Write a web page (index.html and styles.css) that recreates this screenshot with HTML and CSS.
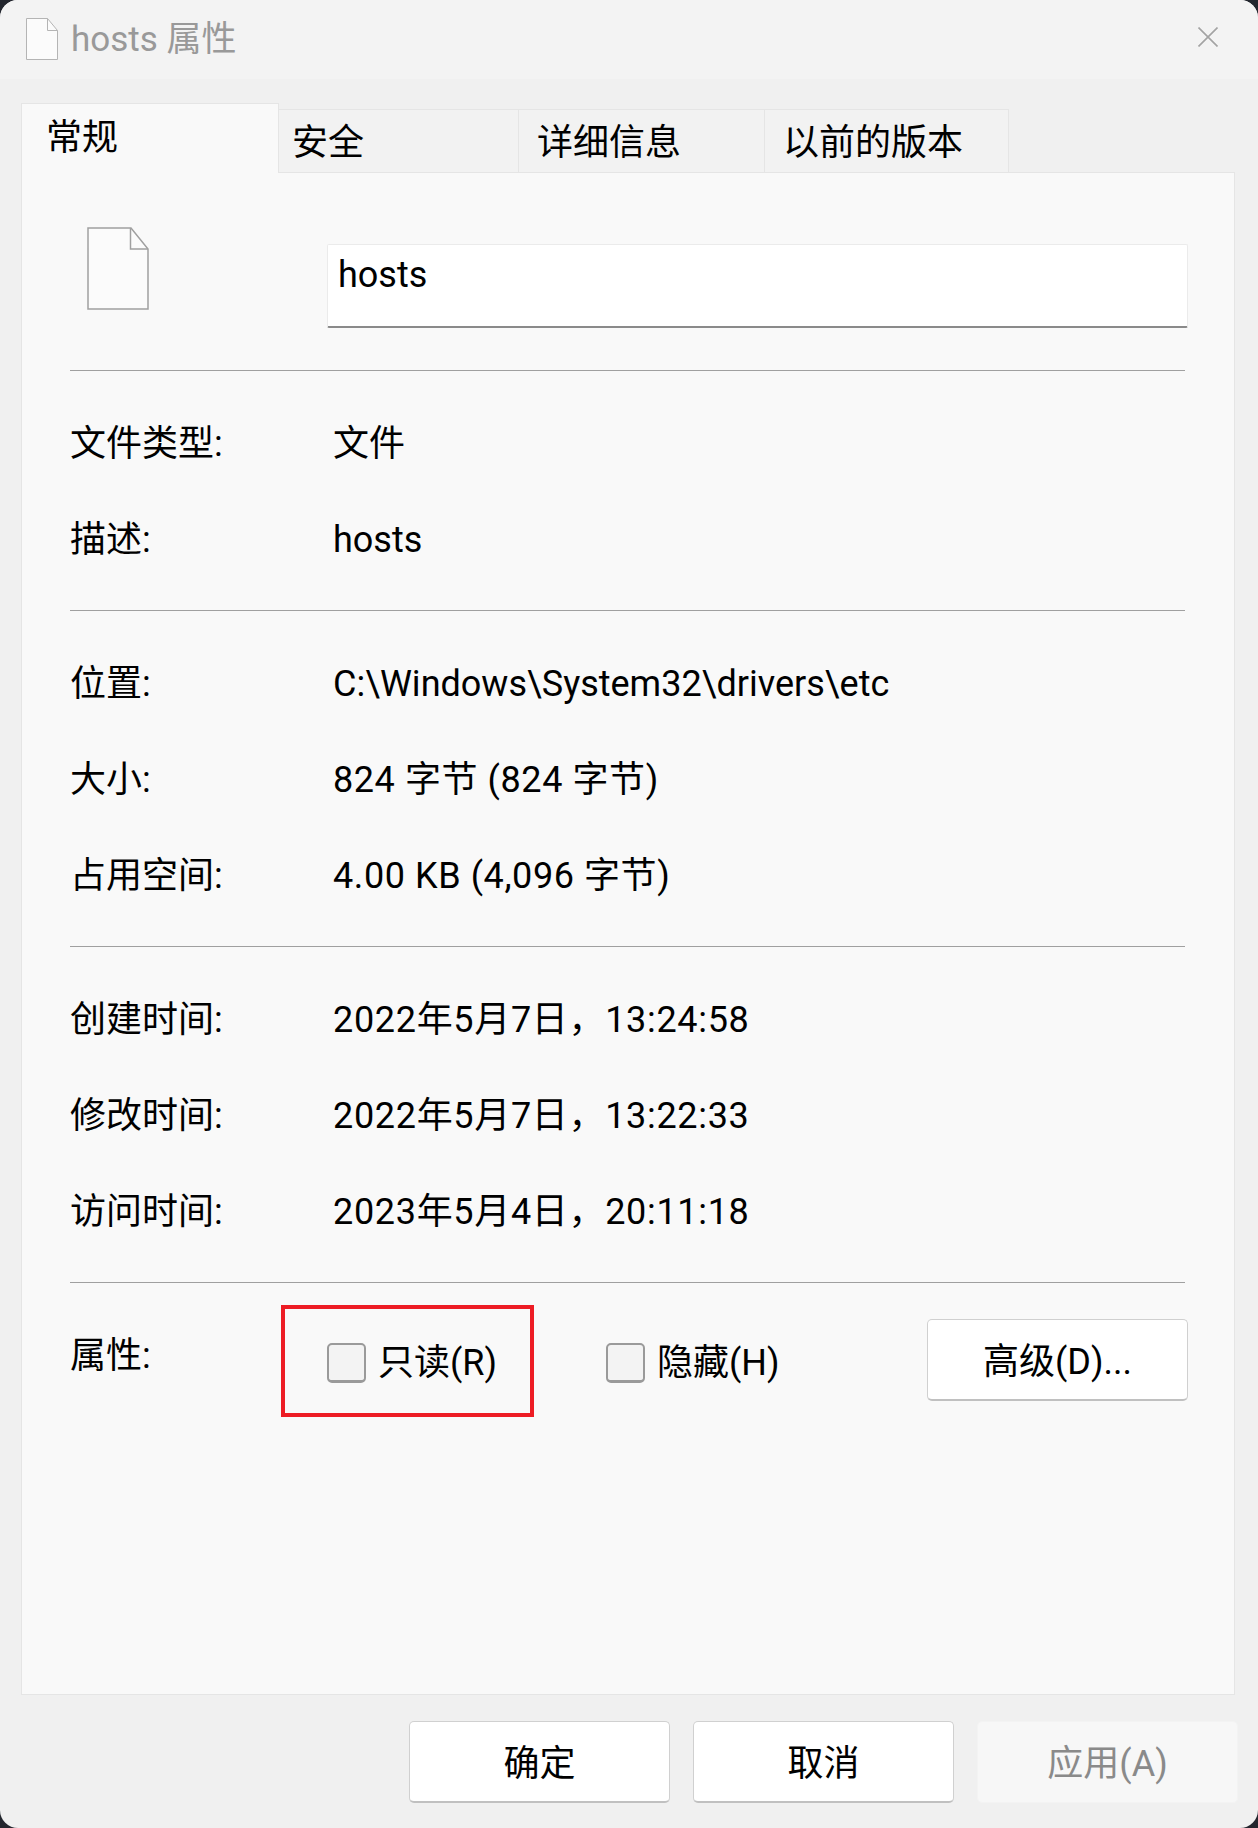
FILE: index.html
```html
<!DOCTYPE html>
<html lang="zh-CN">
<head>
<meta charset="utf-8">
<title>hosts 属性</title>
<link rel="stylesheet" href="styles.css">
</head>
<body>
<div class="window">
  <header class="titlebar">
    <svg class="title-icon" viewBox="0 0 32 42"><path d="M.5.5h21l10 12v29H.5z" fill="#fbfbfb" stroke="#b4b4b4"/><path d="M21.5.5v12h10" fill="none" stroke="#b4b4b4"/></svg>
    <span class="title-text">hosts 属性</span>
    <svg class="close" viewBox="0 0 20 20"><path d="M.5.5l19 19M19.5.5l-19 19" fill="none" stroke="#a3a3a3" stroke-width="1.6"/></svg>
  </header>
  <main class="content">
    <nav class="tabs">
      <div class="tab tab-active">常规</div>
      <div class="tab tab-w1">安全</div>
      <div class="tab tab-w2">详细信息</div>
      <div class="tab tab-w3">以前的版本</div>
    </nav>
    <section class="panel">
      <div class="head">
        <svg class="file-icon" viewBox="0 0 62 83"><path d="M1 1h43l17 21v60H1z" fill="#fbfbfb" stroke="#a0a0a0" stroke-width="1.5"/><path d="M43.5 1v21H61" fill="none" stroke="#a0a0a0" stroke-width="1.5"/></svg>
        <div class="name-input">hosts</div>
      </div>
      <hr class="rule rule-first">
      <div class="row"><span class="label">文件类型:</span><span>文件</span></div>
      <div class="row"><span class="label">描述:</span><span>hosts</span></div>
      <hr class="rule">
      <div class="row"><span class="label">位置:</span><span>C:\Windows\System32\drivers\etc</span></div>
      <div class="row"><span class="label">大小:</span><span class="wide">824 字节 (824 字节)</span></div>
      <div class="row"><span class="label">占用空间:</span><span class="wide">4.00 KB (4,096 字节)</span></div>
      <hr class="rule">
      <div class="row"><span class="label">创建时间:</span><span class="wide date">2022年5月7日，13:24:58</span></div>
      <div class="row"><span class="label">修改时间:</span><span class="wide date">2022年5月7日，13:22:33</span></div>
      <div class="row"><span class="label">访问时间:</span><span class="wide date">2023年5月4日，20:11:18</span></div>
      <hr class="rule">
      <div class="attrs">
        <span class="attr-label">属性:</span>
        <div class="check check-ro"><span class="box"></span><span class="check-text">只读(R)</span><span class="mark"></span></div>
        <div class="check check-hidden"><span class="box"></span><span class="check-text">隐藏(H)</span></div>
        <button class="btn btn-adv">高级(D)...</button>
      </div>
    </section>
    <footer class="actions">
      <button class="btn">确定</button>
      <button class="btn">取消</button>
      <button class="btn btn-off">应用(A)</button>
    </footer>
  </main>
</div>
</body>
</html>
```

FILE: styles.css
```css
* { box-sizing: border-box; }
html, body { margin: 0; padding: 0; }
body {
  width: 1258px;
  height: 1828px;
  background: #23262e;
  font-family: Roboto, "Noto Sans CJK SC", sans-serif;
  font-size: 36px;
  color: #000;
  overflow: hidden;
}
.window {
  width: 1258px;
  height: 1828px;
  background: #f0f0f0;
  border-radius: 18px;
  overflow: hidden;
  display: flex;
  flex-direction: column;
}
.titlebar {
  height: 79px;
  background: #f3f3f3;
  display: flex;
  align-items: center;
  padding: 0 40px 0 26px;
  flex: none;
}
.title-icon { width: 32px; height: 42px; margin-top: -2px; }
.title-text { margin-left: 13px; color: #999; font-size: 35px; line-height: 1; margin-top: 0; }
.close { width: 20px; height: 20px; margin-left: auto; margin-top: -6px; }
.content { flex: 1; padding: 24px 23px 0 21px; display: flex; flex-direction: column; }
.tabs { display: flex; height: 69px; align-items: flex-end; flex: none; }
.tab {
  height: 63px;
  background: #f2f2f2;
  border: 1px solid #e5e5e5;
  border-left: 0;
  border-bottom: 0;
  display: flex;
  align-items: center;
  line-height: 1;
  padding-top: 4px;
}
.tab-active {
  width: 258px;
  height: 70px;
  background: #f9f9f9;
  border-left: 1px solid #e5e5e5;
  padding: 0 0 2px 24px;
  margin-bottom: -1px;
  position: relative;
}
.tab-w1 { width: 240px; padding-left: 13px; }
.tab-w2 { width: 246px; padding-left: 18px; }
.tab-w3 { width: 244px; padding-left: 18px; }
.panel {
  height: 1523px;
  background: #f9f9f9;
  border: 1px solid #e5e5e5;
  padding: 0 48px;
  flex: none;
}
.head { height: 197px; display: flex; align-items: flex-start; }
.file-icon { width: 62px; height: 83px; margin: 54px 0 0 17px; flex: none; }
.name-input {
  width: 861px;
  height: 84px;
  margin: 71px 0 0 178px;
  background: #fff;
  border: 1px solid #ebebeb;
  border-bottom: 2px solid #8a8a8a;
  border-radius: 2px;
  padding: 0 0 0 10px;
  line-height: 60px;
  flex: none;
}
.rule { margin: 0; border: 0; height: 1px; background: #a0a0a0; width: 1115px; }
.row { display: flex; height: 96px; align-items: center; line-height: 48px; }
.rule + .row { margin-top: 25px; }
.row + .rule { margin-top: 22px; }
.label { width: 263px; flex: none; }
.wide { letter-spacing: .58px; }
.date { letter-spacing: .68px; }
.attrs { height: 135px; display: flex; position: relative; }
.attr-label { width: 257px; line-height: 48px; margin-top: 49px; flex: none; }
.check { display: flex; align-items: center; gap: 12px; height: 40px; margin-top: 60px; position: relative; flex: none; }
.check-ro { width: 279px; }
.check-hidden { width: 321px; }
.check-text { line-height: 48px; }
.box { width: 39px; height: 40px; background: #f3f3f3; border: 2px solid #9a9a9a; border-bottom-width: 3px; border-radius: 5px; flex: none; }
.mark {
  position: absolute;
  left: -46px;
  top: -38px;
  width: 253px;
  height: 112px;
  border: 4px solid #ed1c24;
}
.btn {
  width: 261px;
  height: 82px;
  background: #fff;
  border: 1px solid #d0d0d0;
  border-bottom: 2px solid #c0c0c0;
  border-radius: 5px;
  font: inherit;
  color: #000;
  padding: 0 0 4px;
  flex: none;
}
.btn-adv { margin-top: 36px; }
.btn-off { background: #f7f7f7; border: 1px solid #f3f3f3; color: #8a8a8a; }
.actions { display: flex; gap: 23px; padding: 26px 0 0 388px; margin-right: -24px; }
```
